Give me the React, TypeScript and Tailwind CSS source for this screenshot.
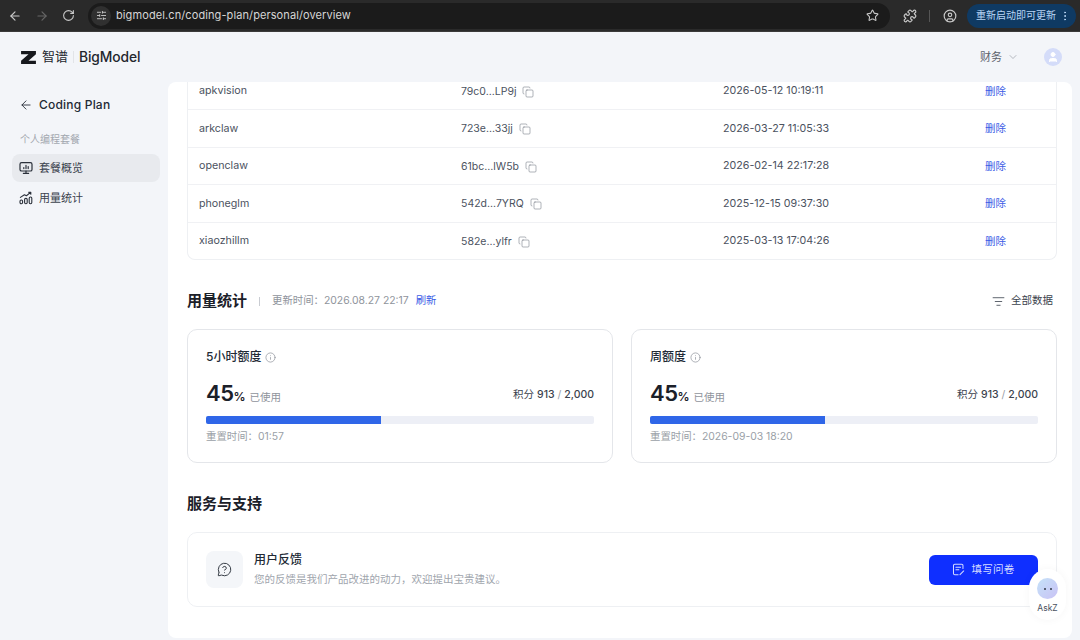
import React from 'react';
import { ArrowLeft, ArrowRight, RotateCw, Star, Puzzle, CircleUser, EllipsisVertical, ChevronDown, Copy, Info, ListFilter, MessageCircleQuestion, SlidersHorizontal, User } from 'lucide-react';

const font = { fontFamily: '"Inter", "Noto Sans CJK SC", sans-serif' };

const keys = [
  { name: 'apkvision', key: '79c0...LP9j', time: '2026-05-12 10:19:11', h: 'h-[28px] pb-[8px]' },
  { name: 'arkclaw', key: '723e...33jj', time: '2026-03-27 11:05:33', h: 'h-[38px] pt-[1px]' },
  { name: 'openclaw', key: '61bc...lW5b', time: '2026-02-14 22:17:28', h: 'h-[37px] pt-[1px]' },
  { name: 'phoneglm', key: '542d...7YRQ', time: '2025-12-15 09:37:30', h: 'h-[38px] pt-[1px]' },
  { name: 'xiaozhillm', key: '582e...ylfr', time: '2025-03-13 17:04:26', h: 'h-[36px] pt-[1px]' },
];

function BrowserBar() {
  return (
    <div className="h-[32px] bg-[#2a2a2a] flex items-center text-[#c8c8c8] border-b border-[#3a3a3a]">
      <div className="w-[88px] flex items-center shrink-0 pl-[8px] gap-[13px]">
        <ArrowLeft className="w-[14px] h-[14px]" />
        <ArrowRight className="w-[14px] h-[14px] text-[#666666]" />
        <RotateCw className="w-[13px] h-[13px]" />
      </div>
      <div className="w-[802px] h-[26px] bg-[#1b1b1b] rounded-full flex items-center pl-[3px] pr-[11px] shrink-0">
        <div className="w-[20px] h-[20px] rounded-full bg-[#303030] flex items-center justify-center">
          <SlidersHorizontal className="w-[11px] h-[11px]" />
        </div>
        <span className="ml-[5px] text-[11px] text-[#d6d6d6] tracking-[0.1px]">bigmodel.cn/coding-plan/personal/overview</span>
        <Star className="w-[13px] h-[13px] ml-auto" />
      </div>
      <Puzzle className="w-[14px] h-[14px] ml-[13px]" />
      <div className="w-px h-[12px] bg-[#555555] ml-[12px]" />
      <CircleUser className="w-[14px] h-[14px] ml-[13px]" />
      <div className="ml-[10px] w-[109px] h-[24px] rounded-full bg-[#0f3a63] flex items-center pl-[9px] text-[10px] text-[#b9d6f5]">
        <span className="whitespace-nowrap">重新启动即可更新</span>
        <EllipsisVertical className="w-[12px] h-[12px] ml-[3px]" />
      </div>
    </div>
  );
}

function MonitorIcon() {
  return (
    <svg viewBox="0 0 14 14" className="w-[14px] h-[14px]" fill="none" stroke="#2a303a" strokeWidth="1.2" strokeLinecap="round">
      <rect x="1" y="1.6" width="12" height="8.4" rx="1.6" />
      <path d="M4.8 7.6V6.6M7 7.6V4.4M9.2 7.6V5.6M7 10V12.4M4.4 12.4H9.6" />
    </svg>
  );
}

function StatsIcon() {
  return (
    <svg viewBox="0 0 14 14" className="w-[14px] h-[14px]" fill="none" stroke="#2a303a" strokeWidth="1.1" strokeLinecap="round" strokeLinejoin="round">
      <rect x="1" y="9" width="2.6" height="3.8" rx="1.2" />
      <rect x="5.6" y="7.4" width="2.6" height="5.4" rx="1.2" />
      <rect x="10.2" y="6" width="2.6" height="6.8" rx="1.2" />
      <path d="M1.4 6.4L5.4 3.8L7.4 4.8L11.6 1.4M9.6 1.2H11.8V3.2" />
    </svg>
  );
}

function FormIcon() {
  return (
    <svg viewBox="0 0 14 14" className="w-[13px] h-[13px]" fill="none" stroke="#d5dcff" strokeWidth="1.1" strokeLinecap="round" strokeLinejoin="round">
      <path d="M6.6 12.6H3A1.4 1.4 0 0 1 1.6 11.2V2.8A1.4 1.4 0 0 1 3 1.4H10.4A1.4 1.4 0 0 1 11.8 2.8V6" />
      <path d="M4.2 4.6H9.2M4.2 7.2H7.4M8.6 12.6L12.6 8.6" />
    </svg>
  );
}

function Sidebar() {
  return (
    <div className="w-[168px] shrink-0 pl-[12px] pr-[8px]">
      <div className="flex items-center pl-[7px] h-[20px] mt-[13px] text-[#222a35]">
        <ArrowLeft className="w-[14px] h-[14px]" strokeWidth={1.5} />
        <span className="ml-[6px] text-[12px] font-medium tracking-[0.2px]">Coding Plan</span>
      </div>
      <div className="pl-[8px] mt-[17px] text-[10px] leading-[14px] text-[#a3a8b0]">个人编程套餐</div>
      <div className="mt-[8px] h-[28px] rounded-[8px] bg-[#e8eaee] flex items-center pl-[7px] text-[11px] text-[#3b424d]">
        <MonitorIcon />
        <span className="ml-[6px]">套餐概览</span>
      </div>
      <div className="mt-[2px] h-[28px] flex items-center pl-[7px] text-[11px] text-[#3b424d]">
        <StatsIcon />
        <span className="ml-[6px]">用量统计</span>
      </div>
    </div>
  );
}

function KeyTable() {
  return (
    <div className="border-x border-b border-[#eef0f3] rounded-b-[8px] text-[10.7px] text-[#4b5260]">
      {keys.map((k, i) => (
        <div key={k.name} className={`${k.h} flex items-center ${i < keys.length - 1 ? 'border-b border-[#f0f1f4]' : ''}`}>
          <span className="w-[273px] pl-[11px] shrink-0">{k.name}</span>
          <span className="w-[262px] shrink-0 flex items-center gap-[6px] text-[10.5px]">
            {k.key}
            <Copy className="w-[12px] h-[12px] text-[#7a808a]" strokeWidth={1.2} />
          </span>
          <span className="w-[262px] shrink-0">{k.time}</span>
          <span className="text-[10.5px] text-[#3c5ce6]">删除</span>
        </div>
      ))}
    </div>
  );
}

function QuotaCard({ title, reset }: { title: string; reset: string }) {
  return (
    <div className="flex-1 h-[134px] border border-[#e4e6ea] rounded-[10px] px-[18px] pt-[19px]">
      <div className="flex items-center text-[12px] font-medium text-[#222a35] leading-[16px]">
        {title}
        <Info className="w-[11px] h-[11px] ml-[4px] text-[#8a8f98]" strokeWidth={1.5} />
      </div>
      <div className="flex items-end justify-between mt-[14px] h-[28px]">
        <div className="flex items-baseline text-[#1b2029]">
          <span className="text-[22px] font-semibold leading-[28px] tracking-[-0.5px]">45</span>
          <span className="text-[12px] font-semibold">%</span>
          <span className="text-[10.5px] text-[#8f949c] ml-[4px]">已使用</span>
        </div>
        <div className="text-[10.5px] text-[#3b424d] pb-[4px]">积分 <span className="font-medium">913</span> <span className="text-[#9aa0a8]">/</span> <span className="font-medium">2,000</span></div>
      </div>
      <div className="mt-[9px] h-[8px] rounded-[2px] bg-[#edeff6] overflow-hidden">
        <div className="h-full bg-[#2f66e8]" style={{ width: '45%' }} />
      </div>
      <div className="mt-[6px] text-[10.4px] leading-[14px] text-[#9a9fa7]">{reset}</div>
    </div>
  );
}

export default function App() {
  return (
    <div className="w-[1080px] h-[640px] overflow-hidden bg-[#f3f5f9] relative" style={font}>
      <BrowserBar />

      {/* top bar */}
      <div className="h-[50px] flex items-center pl-[21px] pr-[18px]">
        <svg viewBox="0 0 16 14" className="w-[15px] h-[13px]">
          <path d="M0 0H16V3.4L8 10.4H16V14H0V10.6L8 3.6H0Z" fill="#16181d" />
        </svg>
        <span className="ml-[6px] text-[13px] text-[#23272e]">智谱</span>
        <div className="w-px h-[12px] bg-[#e2e4e8] ml-[5px]" />
        <span className="ml-[5px] text-[13.8px] font-medium text-[#23272e] tracking-[-0.1px]">BigModel</span>
        <span className="ml-auto text-[11px] text-[#5c626c]">财务</span>
        <ChevronDown className="w-[12px] h-[12px] ml-[5px] text-[#8a8f98]" strokeWidth={1.2} />
        <div className="w-[18px] h-[18px] rounded-full bg-[#d4dcf9] ml-[25px] flex items-center justify-center">
          <User className="w-[12px] h-[12px] text-white" fill="white" />
        </div>
      </div>

      <div className="flex h-[558px]">
        <Sidebar />
        <div className="w-[904px] h-[556px] bg-white rounded-[8px] pl-[19px] pr-[15px] overflow-hidden">
          <KeyTable />

          <div className="flex items-center mt-[30px] h-[22px]">
            <span className="text-[15px] font-semibold text-[#1b2029]">用量统计</span>
            <div className="w-px h-[9px] bg-[#c9ccd2] ml-[12px]" />
            <span className="ml-[12px] text-[10.4px] text-[#8f949c]">更新时间：2026.08.27 22:17</span>
            <span className="ml-[7px] text-[10.4px] text-[#3c5ce6]">刷新</span>
            <ListFilter className="w-[13px] h-[13px] ml-auto text-[#3b424d]" strokeWidth={1.5} />
            <span className="ml-[6px] mr-[4px] text-[10.5px] text-[#3b424d]">全部数据</span>
          </div>

          <div className="flex gap-[18px] mt-[17px]">
            <QuotaCard title="5小时额度" reset="重置时间：01:57" />
            <QuotaCard title="周额度" reset="重置时间：2026-09-03 18:20" />
          </div>

          <div className="mt-[30px] text-[15px] leading-[22px] font-semibold text-[#1b2029]">服务与支持</div>

          <div className="mt-[17px] h-[75px] border border-[#eef0f3] rounded-[10px] flex items-center pl-[18px] pr-[18px]">
            <div className="w-[37px] h-[37px] rounded-[8px] bg-[#f4f6f9] flex items-center justify-center">
              <MessageCircleQuestion className="w-[15px] h-[15px] text-[#2a303a]" strokeWidth={1.5} />
            </div>
            <div className="ml-[11px]">
              <div className="text-[12px] leading-[18px] font-medium text-[#222a35]">用户反馈</div>
              <div className="text-[10.5px] leading-[16px] mt-[3px] text-[#a0a5ad]">您的反馈是我们产品改进的动力，欢迎提出宝贵建议。</div>
            </div>
            <div className="ml-auto w-[109px] h-[30px] rounded-[6px] bg-[#0f2fff] flex items-center justify-center text-[10.5px] text-[#d5dcff]">
              <FormIcon />
              <span className="ml-[6px] tracking-[0.3px]">填写问卷</span>
            </div>
          </div>
        </div>
      </div>

      {/* AskZ floating button */}
      <div className="absolute left-[1029px] top-[569px] w-[37px] h-[51px] rounded-full bg-white flex flex-col items-center pt-[9px] shadow-[0_0_8px_rgba(0,0,0,0.04)]">
        <div className="w-[21px] h-[21px] rounded-full bg-gradient-to-br from-[#c4e2f8] to-[#c9c2f5] flex items-center justify-center gap-[4px]">
          <div className="w-[2px] h-[2px] rounded-full bg-[#333a48]" />
          <div className="w-[2px] h-[2px] rounded-full bg-[#333a48]" />
        </div>
        <span className="text-[8.5px] mt-[3px] text-[#4b5260]">AskZ</span>
      </div>
    </div>
  );
}
